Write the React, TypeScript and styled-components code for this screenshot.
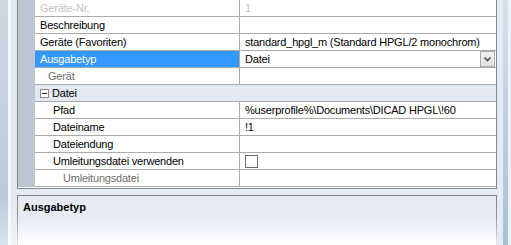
import styled, { createGlobalStyle } from "styled-components"

const GlobalStyle = createGlobalStyle`
  html, body {
    margin: 0;
    padding: 0;
    background: #e4e9f3;
  }
  body {
    font-family: "Liberation Sans", Arial, sans-serif;
    font-size: 11px;
    letter-spacing: -0.2px;
    color: #000;
  }
`

type Tone = "normal" | "muted" | "disabled"

type Prop = {
    name: string
    value?: string
    tone?: Tone
    indent: number
    selected?: boolean
    dropdown?: boolean
    checkbox?: boolean
}

const general: Prop[] = [
    { name: "Geräte-Nr.", value: "1", tone: "disabled", indent: 5 },
    { name: "Beschreibung", indent: 5 },
    { name: "Geräte (Favoriten)", value: "standard_hpgl_m (Standard HPGL/2 monochrom)", indent: 5 },
    { name: "Ausgabetyp", value: "Datei", indent: 5, selected: true, dropdown: true },
    { name: "Gerät", tone: "muted", indent: 13 },
]

const datei: Prop[] = [
    { name: "Pfad", value: "%userprofile%\\Documents\\DICAD HPGL\\!60", indent: 18 },
    { name: "Dateiname", value: "!1", indent: 18 },
    { name: "Dateiendung", indent: 18 },
    { name: "Umleitungsdatei verwenden", indent: 18, checkbox: true },
    { name: "Umleitungsdatei", tone: "muted", indent: 28 },
]

const toneColor: Record<Tone, string> = {
    normal: "#000000",
    muted: "#6d6d6d",
    disabled: "#c3c3c3",
}

function PropRow({ p }: { p: Prop }) {
    const tone = p.tone ?? "normal"
    return (
        <Row>
            <Margin />
            <NameCell $indent={p.indent} $selected={!!p.selected} $tone={tone}>
                {p.name}
            </NameCell>
            <ValueCell $tone={tone}>
                {p.value && <ValueText>{p.value}</ValueText>}
                {p.checkbox && <CheckBox />}
                {p.dropdown && (
                    <DropButton>
                        <svg width="13" height="14" viewBox="0 0 13 14">
                            <path d="M3.5 5.5 L6.5 8.5 L9.5 5.5" fill="none" stroke="#4a4a4a" strokeWidth="1.6" />
                        </svg>
                    </DropButton>
                )}
            </ValueCell>
        </Row>
    )
}

export default function App() {
    return (
        <>
            <GlobalStyle />
            <Window>
                <LeftFrame />
                <Main>
                    <Grid>
                        {general.map((p) => (
                            <PropRow key={p.name} p={p} />
                        ))}
                        <Row>
                            <Margin />
                            <Category>
                                <Toggle />
                                Datei
                            </Category>
                        </Row>
                        {datei.map((p) => (
                            <PropRow key={p.name} p={p} />
                        ))}
                    </Grid>
                    <Description>
                        <h4>Ausgabetyp</h4>
                    </Description>
                </Main>
                <RightFrame />
            </Window>
        </>
    )
}

const Window = styled.div`
    display: flex;
    width: 511px;
    height: 245px;
    overflow: hidden;
`

const LeftFrame = styled.div`
    flex: none;
    width: 17px;
    background:
        linear-gradient(to bottom, rgba(255, 255, 255, 0) 80%, rgba(255, 255, 255, 0.5) 100%),
        linear-gradient(to right, transparent 0 8px, #f5f8fb 8px 11px, #e2e8f1 11px),
        linear-gradient(to bottom, #cfd8e2, #b6c8db);
`

const RightFrame = styled.div`
    flex: none;
    width: 14px;
    background:
        linear-gradient(to right, #e6ebf3 0 6px, transparent 6px 11px, #eef2f7 11px),
        linear-gradient(to bottom, #d6e0ea, #a8c0d9);
`

const Main = styled.div`
    flex: 1;
    display: flex;
    flex-direction: column;
    background: #e4e9f3;
`

const Grid = styled.div`
    margin-top: -1px;
    border: 1px solid #828790;
    background: #fff;
    padding-bottom: 1px;
`

const Row = styled.div`
    display: flex;
    height: 17px;
`

const Margin = styled.div`
    flex: none;
    width: 17px;
    background: #bcc6d2;
`

const NameCell = styled.div<{ $indent: number; $selected: boolean; $tone: Tone }>`
    flex: none;
    width: 205px;
    box-sizing: border-box;
    padding-left: ${(p) => p.$indent}px;
    line-height: 16px;
    white-space: nowrap;
    border-right: 1px solid #ababab;
    border-bottom: 1px solid #ababab;
    background: ${(p) => (p.$selected ? "#3399ff" : "#fff")};
    color: ${(p) => (p.$selected ? "#fff" : toneColor[p.$tone])};
`

const ValueCell = styled.div<{ $tone: Tone }>`
    flex: 1;
    display: flex;
    align-items: center;
    justify-content: space-between;
    padding-left: 5px;
    line-height: 16px;
    white-space: nowrap;
    border-bottom: 1px solid #ababab;
    color: ${(p) => toneColor[p.$tone]};
`

const ValueText = styled.span`
    flex: 1;
`

const DropButton = styled.div`
    flex: none;
    display: flex;
    align-items: center;
    justify-content: center;
    width: 13px;
    height: 14px;
    margin-right: 1px;
    border: 1px solid #acacac;
    background: linear-gradient(to bottom, #f2f2f2, #e0e0e0);
`

const CheckBox = styled.div`
    flex: none;
    width: 11px;
    height: 11px;
    border: 1px solid #707070;
    background: #fff;
`

const Category = styled.div`
    flex: 1;
    display: flex;
    align-items: center;
    gap: 3px;
    padding-left: 5px;
    line-height: 16px;
    background: #e3e8f3;
    border-bottom: 1px solid #ababab;
`

const Toggle = styled.span`
    position: relative;
    width: 7px;
    height: 7px;
    border: 1px solid #8e8f8f;
    background: #fff;
    &::after {
        content: "";
        position: absolute;
        left: 1px;
        top: 3px;
        width: 5px;
        height: 1px;
        background: #222;
    }
`

const Description = styled.div`
    flex: 1;
    margin-top: 6px;
    padding: 5px 5px;
    border-style: solid;
    border-width: 1px 1px 0 1px;
    border-image: linear-gradient(to bottom, #838383 0, #909090 40%, #e6e9ee 100%) 1;
    background: linear-gradient(to bottom, #e4e9f4 0, #e6ebf5 45%, #ffffff 100%);
    h4 {
        margin: 0;
        font-size: 11px;
        font-weight: bold;
        letter-spacing: 0;
        line-height: 13px;
    }
`
